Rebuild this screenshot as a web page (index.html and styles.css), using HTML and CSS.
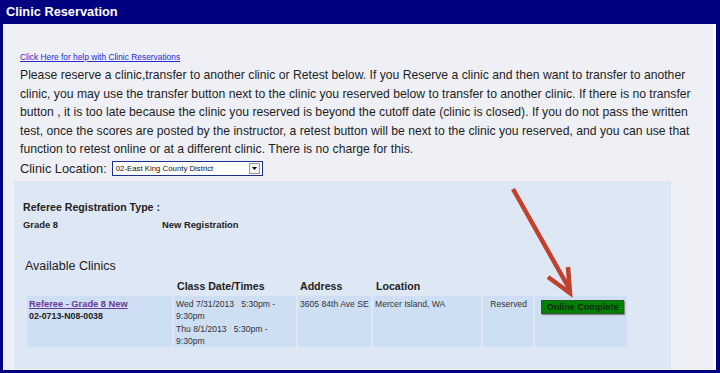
FILE: index.html
```html
<!DOCTYPE html>
<html>
<head>
<meta charset="utf-8">
<link rel="stylesheet" href="styles.css">
</head>
<body>
<div class="header">Clinic Reservation</div>
<div class="content">
  <a class="help" href="#">Click Here for help with Clinic Reservations</a>
  <p class="intro">Please reserve a clinic,transfer to another clinic or Retest below. If you Reserve a clinic and then want to transfer to another<br>clinic, you may use the transfer button next to the clinic you reserved below to transfer to another clinic. If there is no transfer<br>button , it is too late because the clinic you reserved is beyond the cutoff date (clinic is closed). If you do not pass the written<br>test, once the scores are posted by the instructor, a retest button will be next to the clinic you reserved, and you can use that<br>function to retest online or at a different clinic. There is no charge for this.</p>
  <div class="loc-row">
    <span class="loc-label">Clinic Location:</span>
    <span class="select"><span class="select-text">02-East King County District</span><span class="select-btn"><svg width="5" height="3" viewBox="0 0 5 3"><path d="M0 0h5L2.5 3z" fill="#000"/></svg></span></span>
  </div>
  <div class="panel">
    <div class="reg-title">Referee Registration Type :</div>
    <div class="reg-row"><span class="reg-grade">Grade 8</span><span>New Registration</span></div>
    <div class="avail">Available Clinics</div>
    <table class="clinics">
      <colgroup>
        <col class="c1"><col class="c2"><col class="c3"><col class="c4"><col class="c5"><col class="c6">
      </colgroup>
      <tr class="head">
        <th></th>
        <th>Class Date/Times</th>
        <th>Address</th>
        <th>Location</th>
        <th></th>
        <th></th>
      </tr>
      <tr class="row">
        <td class="name"><a class="clinic-link" href="#">Referee - Grade 8 New</a><div class="code">02-0713-N08-0038</div></td>
        <td>Wed 7/31/2013&nbsp;&nbsp; 5:30pm -<br>9:30pm<br>Thu 8/1/2013&nbsp;&nbsp; 5:30pm -<br>9:30pm</td>
        <td class="nowrap">3605 84th Ave SE</td>
        <td>Mercer Island, WA</td>
        <td class="status">Reserved</td>
        <td><span class="btn">Online Complete</span></td>
      </tr>
    </table>
  </div>
  <svg class="arrow" width="80" height="120" viewBox="0 0 80 120">
    <path d="M3 3 L60 104 M38 91 L60 107 L58 81" stroke="#c0412c" stroke-width="4.5" fill="none" stroke-linecap="butt" stroke-linejoin="miter"/>
  </svg>
</div>
</body>
</html>
```

FILE: styles.css
```css
html, body {
  margin: 0;
  padding: 0;
}
body {
  background: #000080;
  width: 720px;
  height: 373px;
  overflow: hidden;
  font-family: "Liberation Sans", Arial, sans-serif;
}
.header {
  height: 24px;
  line-height: 24px;
  color: #fff;
  font-weight: bold;
  font-size: 12.8px;
  padding-left: 6px;
}
.content {
  position: relative;
  margin: 0 4px 0 3px;
  height: 346px;
  background: #eef0f6;
  border-right: 3px solid #fafbfd;
  box-sizing: border-box;
  padding: 28px 0 0 17px;
}
.help {
  display: block;
  font-size: 8.4px;
  line-height: 10px;
  color: #2a2ad0;
  text-decoration: underline;
}
.intro {
  margin: 4px 0 0 0;
  width: 690px;
  font-size: 12.2px;
  line-height: 18.5px;
  color: #1e1e1e;
}
.loc-row {
  display: flex;
  align-items: center;
  margin-top: 1px;
  height: 18px;
}
.loc-label {
  font-size: 12.8px;
  color: #1e1e1e;
  margin-right: 5px;
}
.select {
  display: flex;
  align-items: center;
  width: 149px;
  height: 13px;
  border: 1px solid #1c2f8a;
  background: #fff;
}
.select-text {
  flex: 1;
  font-size: 7.8px;
  padding-left: 3px;
  color: #111;
}
.select-btn {
  width: 9px;
  height: 9px;
  margin-right: 2px;
  border: 1px solid #999;
  background: #f2f2f2;
  display: flex;
  align-items: center;
  justify-content: center;
}
.panel {
  margin: 3px 0 0 -6px;
  width: 657px;
  height: 188px;
  background: #dee8f5;
  padding: 20px 0 0 9px;
  box-sizing: border-box;
}
.reg-title {
  font-size: 10.6px;
  font-weight: bold;
  color: #222;
  line-height: 13px;
}
.reg-row {
  display: flex;
  font-size: 9.4px;
  font-weight: bold;
  color: #222;
  margin-top: 5.5px;
  line-height: 12px;
}
.reg-grade {
  width: 139px;
}
.avail {
  margin-top: 27px;
  font-size: 12.5px;
  color: #222;
  line-height: 16px;
  padding-left: 2px;
}
.clinics {
  table-layout: fixed;
  width: 604px;
  border-collapse: separate;
  border-spacing: 2px 0;
  margin: 4px 0 0 2px;
  font-size: 8.6px;
  color: #333;
}
.c1 { width: 145px; }
.c2 { width: 122px; }
.c3 { width: 73px; }
.c4 { width: 108px; }
.c5 { width: 50px; }
.c6 { width: 92px; }
.clinics th {
  font-size: 10.6px;
  font-weight: bold;
  text-align: left;
  color: #222;
  padding: 0 2px 3px 2px;
  height: 18px;
  line-height: 13px;
  vertical-align: bottom;
  box-sizing: border-box;
}
.clinics th:nth-child(2),
.clinics th:nth-child(4) {
  padding-left: 3px;
}
.clinics td {
  background: #cedff4;
  vertical-align: top;
  padding: 2px 2px 0 2px;
  height: 51px;
  line-height: 12.3px;
  box-sizing: border-box;
}
.clinics td.nowrap {
  white-space: nowrap;
}
.clinics td.status {
  text-align: right;
  padding-right: 6px;
}
.clinic-link {
  font-size: 9.3px;
  font-weight: bold;
  color: #6a3a96;
  text-decoration: underline;
}
.code {
  font-size: 8.8px;
  font-weight: bold;
  color: #222;
}
.btn {
  display: block;
  margin: 2px 0 0 4px;
  width: 81px;
  height: 12px;
  line-height: 12px;
  background: #008000;
  border: 1px solid #2a5a2a;
  box-shadow: 1px 1px 1px #888;
  font-size: 9px;
  font-weight: bold;
  color: #0e2a0e;
  text-align: center;
}
.arrow {
  position: absolute;
  left: 507px;
  top: 162px;
}
```
